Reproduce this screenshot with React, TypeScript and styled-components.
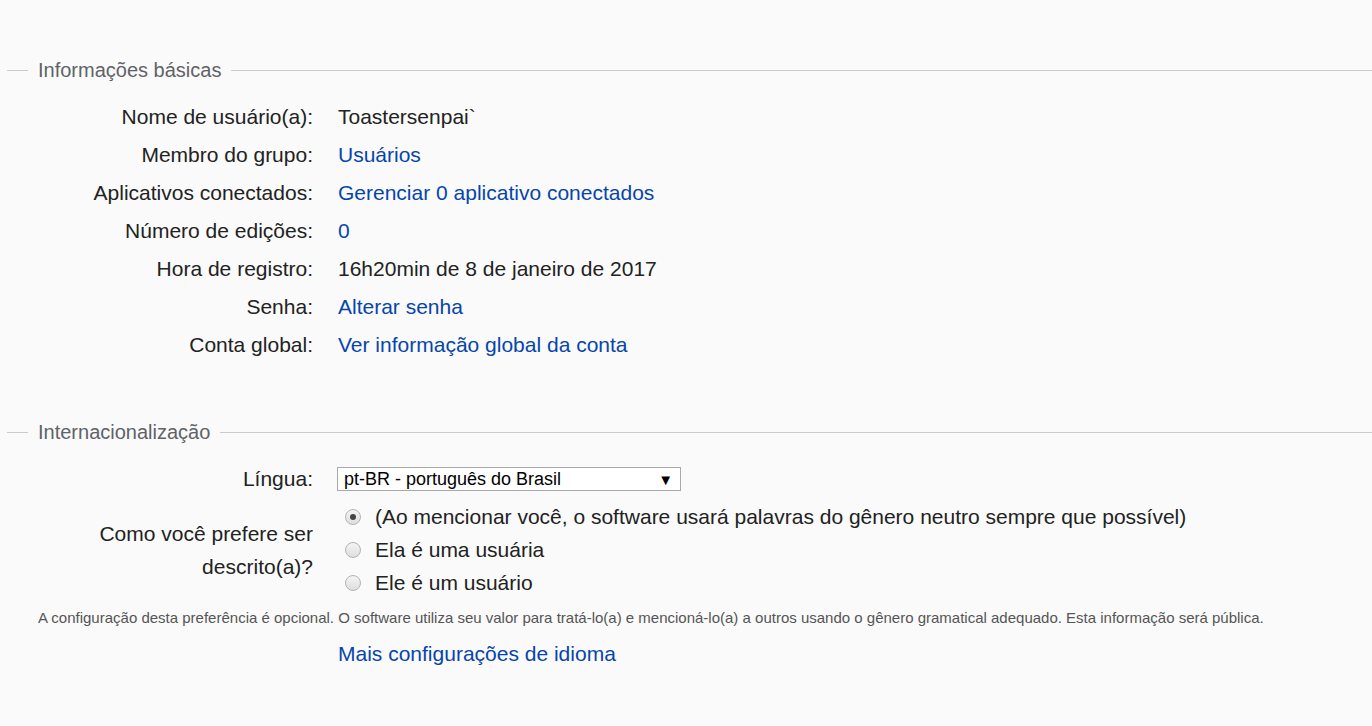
import React from "react";
import styled, { createGlobalStyle } from "styled-components";

const Global = createGlobalStyle`
  html, body { margin: 0; padding: 0; background: #fafafa; }
  body { font-family: "Liberation Sans", Arial, sans-serif; color: #222; }
`;

const Page = styled.div`
  width: 1372px;
  height: 726px;
  overflow: hidden;
  padding-top: 56px;
  box-sizing: border-box;
`;

const Section = styled.section<{ $gap?: number }>`
  margin-top: ${(p) => p.$gap ?? 0}px;
`;

const Legend = styled.div`
  display: flex;
  align-items: center;
  height: 28px;
  padding-left: 7px;
  font-size: 20px;
  color: #5f6368;
  &::before {
    content: "";
    width: 21px;
    height: 1px;
    background: #c8ccd1;
    margin-right: 10px;
  }
  &::after {
    content: "";
    flex: 1;
    height: 1px;
    background: #c8ccd1;
    margin-left: 10px;
  }
`;

const Grid = styled.div`
  display: grid;
  grid-template-columns: 313px 1fr;
  column-gap: 25px;
  margin-top: 14px;
  font-size: 21px;
`;

const Label = styled.div`
  text-align: right;
  line-height: 38px;
  white-space: nowrap;
`;

const Value = styled.div`
  line-height: 38px;
  white-space: nowrap;
`;

const Link = styled.a`
  color: #0645ad;
  text-decoration: none;
  cursor: pointer;
`;

const SelectCell = styled.div`
  display: flex;
  align-items: center;
  height: 38px;
`;

const SelectBox = styled.div`
  display: flex;
  align-items: center;
  justify-content: space-between;
  margin-left: -1px;
  width: 344px;
  height: 24px;
  box-sizing: border-box;
  border: 1px solid #a9a9a9;
  background: #fff;
  padding: 0 7px 0 6px;
  font-size: 18px;
  color: #000;
`;

const Arrow = styled.span`
  font-size: 15px;
  color: #000;
`;

const GenderLabel = styled.div`
  display: flex;
  align-items: center;
  justify-content: flex-end;
  text-align: right;
  line-height: 33px;
  margin-top: 2px;
`;

const RadioGroup = styled.div`
  display: flex;
  flex-direction: column;
  margin-top: 2px;
`;

const RadioRow = styled.label`
  display: flex;
  align-items: center;
  height: 33px;
  white-space: nowrap;
`;

const RadioDot = styled.span<{ $checked?: boolean }>`
  width: 16px;
  height: 16px;
  box-sizing: border-box;
  border-radius: 50%;
  border: 1px solid #b4b4b4;
  background: linear-gradient(#f4f4f4, #dedede);
  margin-left: 7px;
  margin-right: 14px;
  display: flex;
  align-items: center;
  justify-content: center;
  &::after {
    content: "";
    width: 6px;
    height: 6px;
    border-radius: 50%;
    background: ${(p) => (p.$checked ? "#444" : "transparent")};
  }
`;

const Note = styled.p`
  margin: 9px 0 0 38px;
  font-size: 15px;
  line-height: 20px;
  color: #555;
  white-space: nowrap;
`;

const LinkRow = styled.div`
  margin: 7px 0 0 338px;
  font-size: 21px;
  line-height: 38px;
`;

const basicRows: { label: string; value: string; link?: boolean }[] = [
  { label: "Nome de usuário(a):", value: "Toastersenpai`" },
  { label: "Membro do grupo:", value: "Usuários", link: true },
  { label: "Aplicativos conectados:", value: "Gerenciar 0 aplicativo conectados", link: true },
  { label: "Número de edições:", value: "0", link: true },
  { label: "Hora de registro:", value: "16h20min de 8 de janeiro de 2017" },
  { label: "Senha:", value: "Alterar senha", link: true },
  { label: "Conta global:", value: "Ver informação global da conta", link: true },
];

const radios = [
  { text: "(Ao mencionar você, o software usará palavras do gênero neutro sempre que possível)", checked: true },
  { text: "Ela é uma usuária", checked: false },
  { text: "Ele é um usuário", checked: false },
];

export default function App() {
  return (
    <Page>
      <Global />
      <Section>
        <Legend>Informações básicas</Legend>
        <Grid>
          {basicRows.map((r) => (
            <React.Fragment key={r.label}>
              <Label>{r.label}</Label>
              <Value>{r.link ? <Link>{r.value}</Link> : r.value}</Value>
            </React.Fragment>
          ))}
        </Grid>
      </Section>
      <Section $gap={54}>
        <Legend>Internacionalização</Legend>
        <Grid>
          <Label>Língua:</Label>
          <SelectCell>
            <SelectBox>
              <span>pt-BR - português do Brasil</span>
              <Arrow>▼</Arrow>
            </SelectBox>
          </SelectCell>
          <GenderLabel>
            Como você prefere ser
            <br />
            descrito(a)?
          </GenderLabel>
          <RadioGroup>
            {radios.map((r) => (
              <RadioRow key={r.text}>
                <RadioDot $checked={r.checked} />
                {r.text}
              </RadioRow>
            ))}
          </RadioGroup>
        </Grid>
        <Note>
          A configuração desta preferência é opcional. O software utiliza seu valor para tratá-lo(a) e mencioná-lo(a) a outros usando o gênero gramatical adequado. Esta informação será pública.
        </Note>
        <LinkRow>
          <Link>Mais configurações de idioma</Link>
        </LinkRow>
      </Section>
    </Page>
  );
}
